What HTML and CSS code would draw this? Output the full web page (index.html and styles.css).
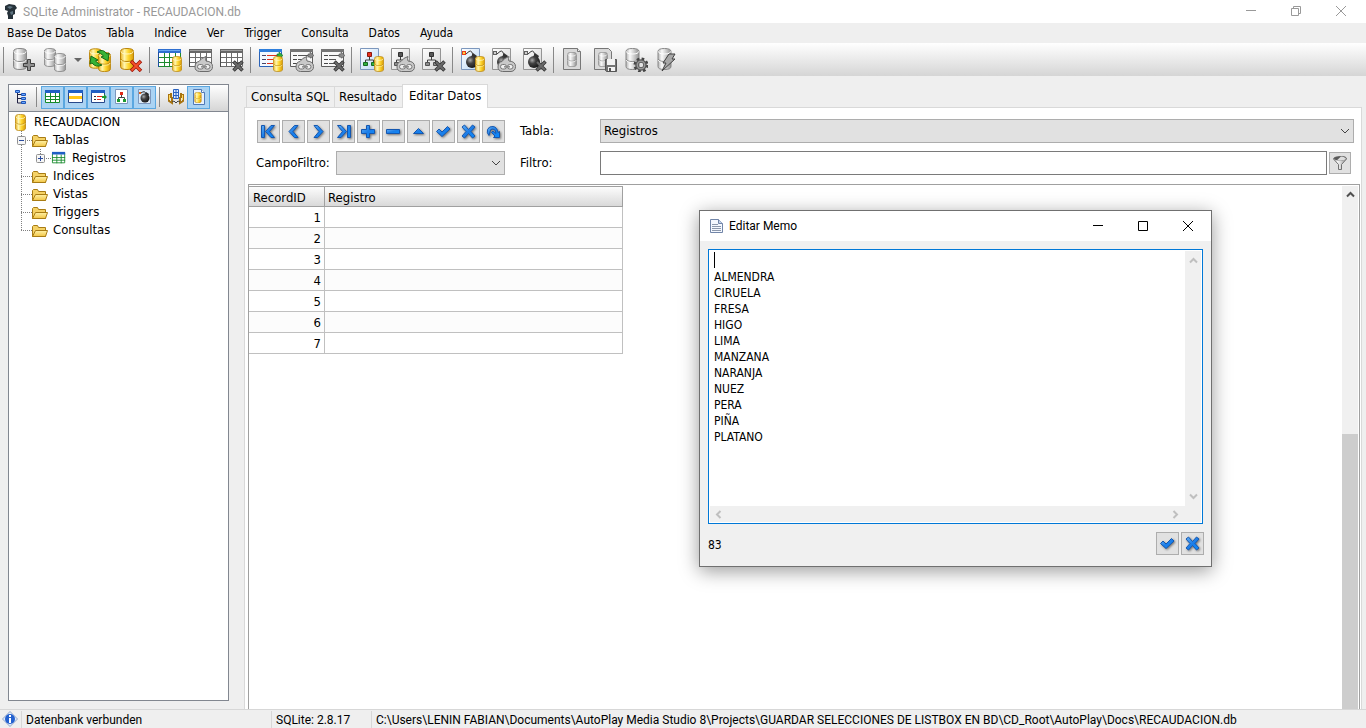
FILE: index.html
```html
<!DOCTYPE html>
<html lang="es">
<head>
    <meta charset="UTF-8">
    <meta name="viewport" content="width=device-width, initial-scale=1.0">
    <title>SQLite Administrator - RECAUDACION.db</title>
    <link rel="stylesheet" href="styles.css">
</head>
<body>
    <!-- Icon sprite -->
    <svg class="sprite" aria-hidden="true">
        <defs>
            <linearGradient id="gold">
                <stop offset="0" stop-color="#e8b020"/>
                <stop offset=".3" stop-color="#fff6b0"/>
                <stop offset=".6" stop-color="#ffd730"/>
                <stop offset="1" stop-color="#d89a08"/>
            </linearGradient>
            <linearGradient id="silver">
                <stop offset="0" stop-color="#b4b4b4"/>
                <stop offset=".3" stop-color="#fafafa"/>
                <stop offset=".6" stop-color="#d0d0d0"/>
                <stop offset="1" stop-color="#939393"/>
            </linearGradient>
            <linearGradient id="blue" x1="0" y1="0" x2="1" y2="1">
                <stop offset="0" stop-color="#64b0f5"/>
                <stop offset=".5" stop-color="#1b7de8"/>
                <stop offset="1" stop-color="#0a8cff"/>
            </linearGradient>
            <linearGradient id="paper" x1="0" y1="0" x2="1" y2="1">
                <stop offset="0" stop-color="#ffffff"/>
                <stop offset="1" stop-color="#b9d8f6"/>
            </linearGradient>
            <linearGradient id="folderFill" x1="0" y1="0" x2="0" y2="1">
                <stop offset="0" stop-color="#fff2a8"/>
                <stop offset="1" stop-color="#f2c544"/>
            </linearGradient>
            <radialGradient id="ball" cx=".35" cy=".35" r=".7">
                <stop offset="0" stop-color="#aaaaaa"/>
                <stop offset=".4" stop-color="#444444"/>
                <stop offset="1" stop-color="#151515"/>
            </radialGradient>
        </defs>

        <symbol id="db" viewBox="0 0 14 22">
            <path d="M.5 3.5Q.5.5 7 .5t6.500 3v15q0 3-6.500 3t-6.500-3z" fill="url(#gold)" stroke="#b98408"/>
            <path d="M1 3.500q0 2.500 6 2.500t6-2.500" fill="none" stroke="#fff8c8"/>
            <path d="M1 11q0 2.500 6 2.500t6-2.500" fill="none" stroke="#b98408"/>
            <path d="M1 12q0 2.500 6 2.500t6-2.500" fill="none" stroke="#fff3a0"/>
        </symbol>
        <symbol id="db-gray" viewBox="0 0 14 22">
            <path d="M.5 3.5Q.5.5 7 .5t6.500 3v15q0 3-6.500 3t-6.500-3z" fill="url(#silver)" stroke="#868686"/>
            <path d="M1 3.500q0 2.500 6 2.500t6-2.500" fill="none" stroke="#ffffff"/>
            <path d="M1 11q0 2.500 6 2.500t6-2.500" fill="none" stroke="#868686"/>
            <path d="M1 12q0 2.500 6 2.500t6-2.500" fill="none" stroke="#f8f8f8"/>
        </symbol>
        <symbol id="cross-gray" viewBox="0 0 12 12">
            <path d="M1.500 1.500l9 9M10.500 1.500l-9 9" stroke="#333333" stroke-width="3.500"/>
            <path d="M2 2l8 8M10 2l-8 8" stroke="#6a6a6a" stroke-width="2"/>
        </symbol>
        <symbol id="link" viewBox="0 0 19 16">
            <path d="M1 11q0-5 4-5.500Q7 2 12 .5q-1 2 0 4.500 6.500.5 6.500 5.500 0 4.500-4.500 5H5.500Q1 15 1 11z" fill="#c9c9c9" stroke="#6c6c6c"/>
            <rect x="3.500" y="8.500" width="6" height="4.500" rx="2.200" fill="#efefef" stroke="#777777"/>
            <rect x="10.500" y="8.500" width="5.500" height="4.500" rx="2.200" fill="#efefef" stroke="#777777"/>
            <path d="M7 10.800h6" stroke="#8c8c8c" stroke-width="1.500"/>
        </symbol>

        <symbol id="table" viewBox="0 0 24 24">
            <path d="M.5 1.500h22v17H.5z" fill="#ffffff" stroke="#1e8a2e"/>
            <path d="M6.500 4v15M11.500 4v15M17.500 4v15M0 9.500h23M0 14.500h23" stroke="#1e8a2e"/>
            <path d="M0 1h23v4H0z" fill="#2f6fd0"/>
            <path d="M1 2.500h21" stroke="#69a8f2"/>
            <path d="M.5 4v15" stroke="#1d4fa0"/>
        </symbol>
        <symbol id="view" viewBox="0 0 24 24">
            <path d="M.5 1.500h22v17H.5z" fill="#f4f9ff" stroke="#2b63b8"/>
            <path d="M0 1h23v3H0z" fill="#2f7fdc"/>
            <path d="M3 7.500h4M3 11.500h4M3 15.500h4" stroke="#444466"/>
            <path d="M8 7.500h11M8 11.500h7M8 15.500h6" stroke="#e0301c"/>
            <path d="M18 6h2V4l4 3.500-3 2.500h-1V9h-2z" fill="#2fae3c" stroke="#14701e" stroke-width=".6"/>
        </symbol>
        <symbol id="tree-page" viewBox="0 0 24 24">
            <path d="M.5.5h18v21H.5z" fill="url(#paper)" stroke="#7c97bd"/>
            <path d="M9.500 8v4M5.500 15v-3h8v3" fill="none" stroke="#404040"/>
            <path d="M7.500 4.500h4v4h-4z" fill="#e8301c" stroke="#8a1a10"/>
            <path d="M3.500 14.500h4v3h-4zM11.500 14.500h4v3h-4z" fill="#30b040" stroke="#176a22"/>
        </symbol>
        <symbol id="bomb-page" viewBox="0 0 24 24">
            <path d="M.5.5h18v21H.5z" fill="url(#paper)" stroke="#7c97bd"/>
            <path d="M12 8Q11 1.500 8 3.500L5 6" fill="none" stroke="#333333"/>
            <path d="M1 3h4v4H1z" fill="#e8401c"/>
            <path d="M2 4h2v2H2z" fill="#ffd040"/>
            <path d="M12 5l4 3-2 4-4-3z" fill="#333333"/>
            <circle cx="11" cy="14" r="6" fill="url(#ball)"/>
        </symbol>

        <symbol id="i-db-new" viewBox="0 0 24 24">
            <use href="#db-gray" x="1" y="0" width="14" height="22"/>
            <path d="M15.500 11.500h3v4h4v3h-4v4h-3v-4h-4v-3h4z" fill="#909090" stroke="#404040"/>
        </symbol>
        <symbol id="i-db-open" viewBox="0 0 24 24">
            <use href="#db-gray" x="1" y="0" width="12" height="19"/>
            <use href="#db-gray" x="11" y="5" width="12" height="19"/>
        </symbol>
        <symbol id="i-db-refresh" viewBox="0 0 24 24">
            <use href="#db" x="1" y="0" width="13" height="21"/>
            <use href="#db" x="10" y="4" width="13" height="20"/>
            <path d="M9 4q6-4 10 2l2-1-1 8-7-4 2.500-1Q13 5 9 4z" fill="#35b335" stroke="#166916"/>
            <path d="M14 17q-6 3-10-2l-2 1 1-8 7 4-2.500 1Q10 16 14 17z" fill="#35b335" stroke="#166916"/>
        </symbol>
        <symbol id="i-db-delete" viewBox="0 0 24 24">
            <use href="#db" x="1" y="0" width="14" height="22"/>
            <path d="M12 13l10 10M22 13L12 23" stroke="#9c1408" stroke-width="3.500"/>
            <path d="M12.500 13.500l9 9M21.500 13.500l-9 9" stroke="#f4502c" stroke-width="2"/>
        </symbol>

        <symbol id="i-table-add" viewBox="0 0 24 24">
            <use href="#table" width="24" height="24"/>
            <use href="#db" x="14" y="8" width="10" height="16"/>
        </symbol>
        <symbol id="i-table-edit" viewBox="0 0 24 24">
            <use href="#table" width="24" height="24"/>
            <use href="#link" x="5" y="8" width="19" height="16"/>
        </symbol>
        <symbol id="i-table-del" viewBox="0 0 24 24">
            <use href="#table" width="24" height="24"/>
            <use href="#cross-gray" x="12" y="12" width="12" height="12"/>
        </symbol>
        <symbol id="i-view-add" viewBox="0 0 24 24">
            <use href="#view" width="24" height="24"/>
            <use href="#db" x="14" y="8" width="10" height="16"/>
        </symbol>
        <symbol id="i-view-edit" viewBox="0 0 24 24">
            <use href="#view" width="24" height="24"/>
            <use href="#link" x="5" y="8" width="19" height="16"/>
        </symbol>
        <symbol id="i-view-del" viewBox="0 0 24 24">
            <use href="#view" width="24" height="24"/>
            <use href="#cross-gray" x="12" y="12" width="12" height="12"/>
        </symbol>
        <symbol id="i-index-add" viewBox="0 0 24 24">
            <use href="#tree-page" width="24" height="24"/>
            <use href="#db" x="14" y="8" width="10" height="16"/>
        </symbol>
        <symbol id="i-index-edit" viewBox="0 0 24 24">
            <use href="#tree-page" width="24" height="24"/>
            <use href="#link" x="5" y="8" width="19" height="16"/>
        </symbol>
        <symbol id="i-index-del" viewBox="0 0 24 24">
            <use href="#tree-page" width="24" height="24"/>
            <use href="#cross-gray" x="12" y="12" width="12" height="12"/>
        </symbol>
        <symbol id="i-trigger-add" viewBox="0 0 24 24">
            <use href="#bomb-page" width="24" height="24"/>
            <use href="#db" x="14" y="8" width="10" height="16"/>
        </symbol>
        <symbol id="i-trigger-edit" viewBox="0 0 24 24">
            <use href="#bomb-page" width="24" height="24"/>
            <use href="#link" x="5" y="8" width="19" height="16"/>
        </symbol>
        <symbol id="i-trigger-del" viewBox="0 0 24 24">
            <use href="#bomb-page" width="24" height="24"/>
            <use href="#cross-gray" x="12" y="12" width="12" height="12"/>
        </symbol>
        <symbol id="i-query-new" viewBox="0 0 24 24">
            <path d="M1.500.5h14l3 3v18h-17z" fill="#d9d9d9" stroke="#777777"/>
            <path d="M15.500.5v3h3" fill="#eeeeee" stroke="#777777"/>
            <use href="#db-gray" x="5" y="4" width="10" height="15"/>
        </symbol>
        <symbol id="i-query-save" viewBox="0 0 24 24">
            <path d="M1.500.5h14l3 3v18h-17z" fill="#d9d9d9" stroke="#777777"/>
            <use href="#db-gray" x="5" y="4" width="10" height="15"/>
            <path d="M12.500 11.500h11v12h-10l-1-1z" fill="#747474" stroke="#555555"/>
            <path d="M14 11h8v6h-8zM15 19h7v4h-7z" fill="#f2f2f2"/>
            <path d="M16 20h2v3h-2z" fill="#555555"/>
        </symbol>
        <symbol id="i-db-config" viewBox="0 0 24 24">
            <use href="#db-gray" x="1" y="0" width="15" height="22"/>
            <circle cx="17" cy="17" r="5.500" fill="none" stroke="#444444" stroke-width="4" stroke-dasharray="2.300 2"/>
            <circle cx="17" cy="17" r="4" fill="none" stroke="#555555" stroke-width="3.500"/>
            <circle cx="17" cy="17" r="3.700" fill="none" stroke="#999999" stroke-width="1.500"/>
        </symbol>
        <symbol id="i-db-run" viewBox="0 0 24 24">
            <use href="#db-gray" x="2" y="0" width="15" height="22"/>
            <path d="M14 6h6l-3 5h3L7 23l4-8H8z" fill="#a8a8a8" stroke="#404040"/>
        </symbol>

        <!-- Small icons -->
        <symbol id="s-tree" viewBox="0 0 16 16">
            <path d="M3.500 4v10H8M3.500 9.500H8M3.500 5.500H8" fill="none" stroke="#222244"/>
            <path d="M1.500 1.500h4v2h-4zM7.500 4.500h4v2h-4zM7.500 8.500h4v2h-4zM7.500 12.500h4v2h-4z" fill="#6aa8ff" stroke="#1f55b8"/>
        </symbol>
        <symbol id="s-table" viewBox="0 0 16 16">
            <path d="M.5 2.500h14v11H.5z" fill="#ffffff" stroke="#168a2c"/>
            <path d="M5.500 4v10M10.500 4v10M0 7.500h15M0 10.500h15" stroke="#168a2c"/>
            <path d="M0 1h15v3H0z" fill="#1f5fc4"/>
        </symbol>
        <symbol id="s-view" viewBox="0 0 16 16">
            <path d="M.5 2.500h14v11H.5z" fill="#ffffff" stroke="#27488a"/>
            <path d="M0 1h15v3H0z" fill="#1f5fc4"/>
            <path d="M1 7h13v3H1z" fill="#ffc61a"/>
        </symbol>
        <symbol id="s-index" viewBox="0 0 16 16">
            <path d="M.5 2.500h13v11H.5z" fill="#ffffff" stroke="#27488a"/>
            <path d="M0 1h14v3H0z" fill="#1f5fc4"/>
            <path d="M3 7.500h2M3 10.500h2" stroke="#333333"/>
            <path d="M6 7.500h5M6 10.500h4" stroke="#e02818"/>
            <path d="M11 7h2V5l3 3-3 3V9h-2z" fill="#1c9a30"/>
        </symbol>
        <symbol id="s-tree-page" viewBox="0 0 16 16">
            <path d="M1.500.5h12v14h-12z" fill="#ffffff" stroke="#7c97bd"/>
            <path d="M7.500 6v3M4.500 11V8.500h6V11" fill="none" stroke="#444444"/>
            <path d="M6 3h3v3H6z" fill="#e02818"/>
            <path d="M3 10h3v3H3zM9 10h3v3H9z" fill="#1c9a30"/>
        </symbol>
        <symbol id="s-bomb" viewBox="0 0 16 16">
            <path d="M1.500.5h12v14h-12z" fill="#dceaf8" stroke="#7c97bd"/>
            <path d="M9 5Q8 1 4 4" fill="none" stroke="#222222"/>
            <path d="M2 3h2v2H2z" fill="#e06018"/>
            <path d="M9 3l3 2-1 2-3-1z" fill="#222222"/>
            <circle cx="8" cy="9" r="4.500" fill="url(#ball)"/>
        </symbol>
        <symbol id="s-hands" viewBox="0 0 16 16">
            <path d="M5.500.5h5v9h-5z" fill="#dbe9ff" stroke="#2a62c0"/>
            <path d="M5 3.500h6M5 6.500h6M8 1v8" stroke="#2a62c0"/>
            <path d="M1 5v7l3 2V8M15 5v7l-3 2V8M3 4v5M13 4v5" fill="none" stroke="#a87410" stroke-width="2"/>
            <path d="M1.500 6v5M14.500 6v5" stroke="#ffd860"/>
            <path d="M4 13l2-1 2 2 2-2 2 1" fill="none" stroke="#444444"/>
        </symbol>
        <symbol id="s-dbpage" viewBox="0 0 16 16">
            <path d="M2.500.5h8l3 3v12h-11z" fill="#e8f2ff" stroke="#4f79b8"/>
            <path d="M10.500.5v3h3" fill="#ffffff" stroke="#4f79b8"/>
            <use href="#db" x="3" y="3" width="8" height="11"/>
        </symbol>
        <symbol id="s-folder" viewBox="0 0 16 14">
            <path d="M.5 13.500v-10l1-1h4l1 2h7v9z" fill="#f5d266" stroke="#a87c14"/>
            <path d="M.5 13.500l3-6h12l-2 6z" fill="url(#folderFill)" stroke="#a87c14"/>
        </symbol>

        <!-- Tree branches -->
        <symbol id="b-mid" viewBox="0 0 19 18">
            <path d="M8.500 0v18M8 9.500h11" stroke="#808080" stroke-dasharray="1 1"/>
        </symbol>
        <symbol id="b-end" viewBox="0 0 19 18">
            <path d="M8.500 0v10M8 9.500h11" stroke="#808080" stroke-dasharray="1 1"/>
        </symbol>
        <symbol id="b-line" viewBox="0 0 19 18">
            <path d="M8.500 0v18" stroke="#808080" stroke-dasharray="1 1"/>
        </symbol>
        <symbol id="b-minus" viewBox="0 0 19 18">
            <use href="#b-mid" width="19" height="18"/>
            <rect x="4.500" y="5.500" width="8" height="8" rx="1" fill="#f6f6f6" stroke="#919191"/>
            <path d="M6 9.500h5" stroke="#2a4a9c"/>
        </symbol>
        <symbol id="b-plus" viewBox="0 0 19 18">
            <use href="#b-end" width="19" height="18"/>
            <rect x="4.500" y="5.500" width="8" height="8" rx="1" fill="#f6f6f6" stroke="#919191"/>
            <path d="M6 9.500h5M8.500 7v5" stroke="#2a4a9c"/>
        </symbol>

        <!-- Navigator -->
        <symbol id="n-first" viewBox="0 0 19 19">
            <path d="M2.500 3.500h3v12h-3zM12 3.500h3.500l-5 6 5 6H12l-5.500-6z"/>
        </symbol>
        <symbol id="n-prev" viewBox="0 0 19 19"><path d="M10.500 3.500H14l-5 6 5 6h-3.500l-5.500-6z"/></symbol>
        <symbol id="n-next" viewBox="0 0 19 19"><path d="M8.500 3.500H5l5 6-5 6h3.500l5.500-6z"/></symbol>
        <symbol id="n-last" viewBox="0 0 19 19">
            <path d="M16.500 3.500h-3v12h3zM7 3.500H3.500l5 6-5 6H7l5.500-6z"/>
        </symbol>
        <symbol id="n-plus" viewBox="0 0 19 19"><path d="M7.500 3.500h3v4h5v4h-5v4h-3v-4h-5v-4h5z"/></symbol>
        <symbol id="n-minus" viewBox="0 0 19 19"><path d="M2.500 7.500h13v4h-13z"/></symbol>
        <symbol id="n-edit" viewBox="0 0 19 19"><path d="M4.500 11.500l5-5 5 5z"/></symbol>
        <symbol id="n-ok" viewBox="0 0 19 19"><path d="M2.500 9.500L5 7l3 3 5.500-5.500L16 7l-8 7.500z"/></symbol>
        <symbol id="n-cancel" viewBox="0 0 19 19">
            <path d="M3 5l2.500-2 4 4.500 4-4.500L16 5l-4 4.500 4 4.500-2.500 2-4-4.500-4 4.500L3 14l4-4.500z"/>
        </symbol>
        <symbol id="n-refresh" viewBox="0 0 19 19">
            <path d="M5 13.500Q2.500 11 3.500 7.500 5 4 9 4.500t5 6l1.500-1v6h-6l1.500-1.500-3.500-3.500L9 9l3 2.500Q12 7.500 9 7t-3 3z"/>
        </symbol>

        <symbol id="a-up" viewBox="0 0 9 9"><path d="M1 6.500l3.500-3.500L8 6.500"/></symbol>
        <symbol id="a-down" viewBox="0 0 9 9"><path d="M1 2.500L4.500 6 8 2.500"/></symbol>
        <symbol id="a-left" viewBox="0 0 9 9"><path d="M6.500 1L3 4.500 6.500 8"/></symbol>
        <symbol id="a-right" viewBox="0 0 9 9"><path d="M2.500 1L6 4.500 2.500 8"/></symbol>
        <symbol id="a-combo" viewBox="0 0 10 10"><path d="M1 3l4 4 4-4"/></symbol>

        <symbol id="w-min" viewBox="0 0 11 11"><path d="M0 4.500h10"/></symbol>
        <symbol id="w-max" viewBox="0 0 11 11"><path d="M.5.5h9v9h-9z"/></symbol>
        <symbol id="w-restore" viewBox="0 0 11 11"><path d="M.5 2.500h7v7h-7zM2.500 2V.5h7v7H8"/></symbol>
        <symbol id="w-close" viewBox="0 0 11 11"><path d="M0 0l10 10M10 0L0 10"/></symbol>
    </svg>

    <header class="title-bar">
        <svg class="app-icon" viewBox="0 0 14 16">
            <path d="M1 2l4-2 6 1 2 3-2 2v4l-2 1v4H4v-3L3 9 4 7 1 6z" fill="#26323a"/>
            <path d="M3 3l3-1 3 1-3 2zM6 8l3-1v3l-2 1z" fill="#5d7380"/>
        </svg>
        <h1>SQLite Administrator - RECAUDACION.db</h1>
        <div class="window-buttons">
            <button type="button" aria-label="Minimizar"><svg><use href="#w-min"/></svg></button>
            <button type="button" aria-label="Restaurar"><svg><use href="#w-restore"/></svg></button>
            <button type="button" aria-label="Cerrar"><svg><use href="#w-close"/></svg></button>
        </div>
    </header>

    <nav class="menu-bar">
        <a href="#">Base De Datos</a>
        <a href="#">Tabla</a>
        <a href="#">Indice</a>
        <a href="#">Ver</a>
        <a href="#">Trigger</a>
        <a href="#">Consulta</a>
        <a href="#">Datos</a>
        <a href="#">Ayuda</a>
    </nav>

    <div class="toolbar">
        <span class="separator"></span>
        <button type="button" aria-label="Nueva base de datos"><svg><use href="#i-db-new"/></svg></button>
        <button type="button" aria-label="Abrir base de datos"><svg><use href="#i-db-open"/></svg></button>
        <button type="button" class="drop" aria-label="Recientes"></button>
        <button type="button" aria-label="Actualizar"><svg><use href="#i-db-refresh"/></svg></button>
        <button type="button" aria-label="Borrar base de datos"><svg><use href="#i-db-delete"/></svg></button>
        <span class="separator"></span>
        <button type="button" aria-label="Crear tabla"><svg><use href="#i-table-add"/></svg></button>
        <button type="button" class="disabled" aria-label="Editar tabla"><svg><use href="#i-table-edit"/></svg></button>
        <button type="button" class="disabled" aria-label="Borrar tabla"><svg><use href="#i-table-del"/></svg></button>
        <span class="separator"></span>
        <button type="button" aria-label="Crear vista"><svg><use href="#i-view-add"/></svg></button>
        <button type="button" class="disabled" aria-label="Editar vista"><svg><use href="#i-view-edit"/></svg></button>
        <button type="button" class="disabled" aria-label="Borrar vista"><svg><use href="#i-view-del"/></svg></button>
        <span class="separator"></span>
        <button type="button" aria-label="Crear indice"><svg><use href="#i-index-add"/></svg></button>
        <button type="button" class="disabled" aria-label="Editar indice"><svg><use href="#i-index-edit"/></svg></button>
        <button type="button" class="disabled" aria-label="Borrar indice"><svg><use href="#i-index-del"/></svg></button>
        <span class="separator"></span>
        <button type="button" aria-label="Crear trigger"><svg><use href="#i-trigger-add"/></svg></button>
        <button type="button" class="disabled" aria-label="Editar trigger"><svg><use href="#i-trigger-edit"/></svg></button>
        <button type="button" class="disabled" aria-label="Borrar trigger"><svg><use href="#i-trigger-del"/></svg></button>
        <span class="separator"></span>
        <button type="button" aria-label="Nueva consulta"><svg><use href="#i-query-new"/></svg></button>
        <button type="button" aria-label="Guardar consulta"><svg><use href="#i-query-save"/></svg></button>
        <button type="button" aria-label="Configurar"><svg><use href="#i-db-config"/></svg></button>
        <button type="button" aria-label="Ejecutar"><svg><use href="#i-db-run"/></svg></button>
    </div>

    <main class="workspace">
        <aside class="sidebar">
            <div class="tree-toolbar">
                <button type="button" aria-label="Arbol"><svg><use href="#s-tree"/></svg></button>
                <span class="separator"></span>
                <button type="button" class="pressed" aria-label="Tablas"><svg><use href="#s-table"/></svg></button>
                <button type="button" class="pressed" aria-label="Vistas"><svg><use href="#s-view"/></svg></button>
                <button type="button" class="pressed" aria-label="Consultas"><svg><use href="#s-index"/></svg></button>
                <button type="button" class="pressed" aria-label="Indices"><svg><use href="#s-tree-page"/></svg></button>
                <button type="button" class="pressed" aria-label="Triggers"><svg><use href="#s-bomb"/></svg></button>
                <span class="separator"></span>
                <button type="button" aria-label="Campos"><svg><use href="#s-hands"/></svg></button>
                <button type="button" class="pressed" aria-label="SQL"><svg><use href="#s-dbpage"/></svg></button>
            </div>
            <ul class="tree">
                <li><svg class="root-icon"><use href="#db"/></svg>RECAUDACION</li>
                <li><svg class="branch"><use href="#b-minus"/></svg><svg class="folder"><use href="#s-folder"/></svg>Tablas</li>
                <li><svg class="branch"><use href="#b-line"/></svg><svg class="branch"><use href="#b-plus"/></svg><svg class="folder"><use href="#s-table"/></svg>Registros</li>
                <li><svg class="branch"><use href="#b-mid"/></svg><svg class="folder"><use href="#s-folder"/></svg>Indices</li>
                <li><svg class="branch"><use href="#b-mid"/></svg><svg class="folder"><use href="#s-folder"/></svg>Vistas</li>
                <li><svg class="branch"><use href="#b-mid"/></svg><svg class="folder"><use href="#s-folder"/></svg>Triggers</li>
                <li><svg class="branch"><use href="#b-end"/></svg><svg class="folder"><use href="#s-folder"/></svg>Consultas</li>
            </ul>
        </aside>

        <section class="content">
            <div class="tabs">
                <button type="button" class="tab">Consulta SQL</button>
                <button type="button" class="tab">Resultado</button>
                <button type="button" class="tab active">Editar Datos</button>
            </div>
            <div class="panel">
                <div class="filters">
                    <div class="navigator">
                        <button type="button" class="nav-button" aria-label="Primero"><svg><use href="#n-first"/></svg></button>
                        <button type="button" class="nav-button" aria-label="Anterior"><svg><use href="#n-prev"/></svg></button>
                        <button type="button" class="nav-button" aria-label="Siguiente"><svg><use href="#n-next"/></svg></button>
                        <button type="button" class="nav-button" aria-label="Ultimo"><svg><use href="#n-last"/></svg></button>
                        <button type="button" class="nav-button" aria-label="Insertar"><svg><use href="#n-plus"/></svg></button>
                        <button type="button" class="nav-button" aria-label="Borrar"><svg><use href="#n-minus"/></svg></button>
                        <button type="button" class="nav-button" aria-label="Editar"><svg><use href="#n-edit"/></svg></button>
                        <button type="button" class="nav-button" aria-label="Guardar"><svg><use href="#n-ok"/></svg></button>
                        <button type="button" class="nav-button" aria-label="Cancelar"><svg><use href="#n-cancel"/></svg></button>
                        <button type="button" class="nav-button" aria-label="Refrescar"><svg><use href="#n-refresh"/></svg></button>
                    </div>
                    <label for="tabla">Tabla:</label>
                    <div class="combo">
                        <select id="tabla"><option>Registros</option></select>
                        <svg><use href="#a-combo"/></svg>
                    </div>
                    <div class="field-filter">
                        <label for="campoFiltro">CampoFiltro:</label>
                        <div class="combo">
                            <select id="campoFiltro"><option></option></select>
                            <svg><use href="#a-combo"/></svg>
                        </div>
                    </div>
                    <label for="filtro">Filtro:</label>
                    <div class="filter-box">
                        <input type="text" id="filtro">
                        <button type="button" class="filter-button" aria-label="Filtrar">
                            <svg viewBox="0 0 16 16">
                                <path d="M1.500 4q0-2 6.500-2.500t6.500 2.500l-5 5.500v5h-3v-5z" fill="url(#silver)" stroke="#707070"/>
                                <ellipse cx="8" cy="3.500" rx="6" ry="2" fill="#5a5a5a"/>
                                <path d="M5 5.200q8 1 9-1.700-2-2-5-2z" fill="#dddddd"/>
                            </svg>
                        </button>
                    </div>
                </div>
                <div class="grid-box">
                    <div class="grid-area">
                        <table class="data-grid">
                            <thead>
                                <tr><th class="col-id">RecordID</th><th class="col-text">Registro</th></tr>
                            </thead>
                            <tbody>
                                <tr><td>1</td><td></td></tr>
                                <tr><td>2</td><td></td></tr>
                                <tr><td>3</td><td></td></tr>
                                <tr><td>4</td><td></td></tr>
                                <tr><td>5</td><td></td></tr>
                                <tr><td>6</td><td></td></tr>
                                <tr><td>7</td><td></td></tr>
                            </tbody>
                        </table>
                    </div>
                    <div class="scrollbar">
                        <svg><use href="#a-up"/></svg>
                        <div class="thumb"></div>
                    </div>
                </div>
            </div>
        </section>
    </main>

    <footer class="status-bar">
        <span class="status-icon">
            <svg viewBox="0 0 16 16">
                <path d="M8 .5L15.500 8 8 15.500.5 8z" fill="#dce8fa" stroke="#8fa4c8"/>
                <circle cx="8" cy="8" r="5" fill="#2461cf"/>
                <path d="M7 4h2v2H7zM7 7h2v5H7z" fill="#ffffff"/>
            </svg>
        </span>
        <span class="status-message">Datenbank verbunden</span>
        <span class="status-version">SQLite: 2.8.17</span>
        <span class="status-path">C:\Users\LENIN FABIAN\Documents\AutoPlay Media Studio 8\Projects\GUARDAR SELECCIONES DE LISTBOX EN BD\CD_Root\AutoPlay\Docs\RECAUDACION.db</span>
    </footer>

    <!-- Memo editor window -->
    <div class="memo-window" role="dialog" aria-labelledby="memoTitle">
        <div class="memo-title">
            <svg class="memo-icon" viewBox="0 0 13 14">
                <path d="M.5.5h8l4 4v9H.5z" fill="#f4f8ff" stroke="#7185a8"/>
                <path d="M8.500.5v4h4" fill="#c4d2ea" stroke="#7185a8"/>
                <path d="M2 5.500h6M2 7.500h9M2 9.500h9M2 11.500h9" stroke="#8c98ac"/>
            </svg>
            <h2 id="memoTitle">Editar Memo</h2>
            <div class="window-buttons">
                <button type="button" aria-label="Minimizar"><svg><use href="#w-min"/></svg></button>
                <button type="button" aria-label="Maximizar"><svg><use href="#w-max"/></svg></button>
                <button type="button" aria-label="Cerrar"><svg><use href="#w-close"/></svg></button>
            </div>
        </div>
        <div class="memo-box">
            <textarea aria-label="Memo" spellcheck="false">&#10;
ALMENDRA
CIRUELA
FRESA
HIGO
LIMA
MANZANA
NARANJA
NUEZ
PERA
PIÑA
PLATANO</textarea>
            <div class="memo-vscroll">
                <svg><use href="#a-up"/></svg>
                <svg><use href="#a-down"/></svg>
            </div>
            <div class="memo-hscroll">
                <svg><use href="#a-left"/></svg>
                <svg><use href="#a-right"/></svg>
            </div>
            <span class="caret"></span>
        </div>
        <div class="memo-footer">
            <span class="memo-count">83</span>
            <button type="button" class="nav-button" aria-label="Aceptar"><svg><use href="#n-ok"/></svg></button>
            <button type="button" class="nav-button" aria-label="Cancelar"><svg><use href="#n-cancel"/></svg></button>
        </div>
    </div>
</body>
</html>
```
FILE: styles.css
```css
/* General Styles */
* {
    box-sizing: border-box;
    margin: 0;
    padding: 0;
}

body {
    background-color: #efefef;
    color: #000;
    display: flex;
    flex-direction: column;
    height: 100vh;
    overflow: hidden;
    font-family: "DejaVu Sans Condensed", "DejaVu Sans", sans-serif;
    font-size: 13px;
    line-height: 18px;
}

button,
input,
select,
textarea {
    font: inherit;
    color: inherit;
    border-radius: 0;
}

button {
    border: none;
    background: none;
    display: flex;
    align-items: center;
    justify-content: center;
}

svg {
    display: block;
    flex: none;
}

.sprite {
    position: absolute;
    width: 0;
    height: 0;
}

/* Title bar */
.title-bar {
    display: flex;
    align-items: center;
    height: 23px;
    padding: 0 2px 0 4px;
    gap: 5px;
    background-color: #fff;
    color: #999;
    font-family: Roboto, sans-serif;
}

.title-bar h1,
.memo-title h2 {
    flex: 1;
    font-size: 12px;
    font-weight: normal;
}

.app-icon {
    width: 14px;
    height: 16px;
}

.window-buttons {
    display: flex;
}

.window-buttons button {
    width: 45px;
    height: 20px;
}

.window-buttons svg {
    width: 11px;
    height: 11px;
    fill: none;
    stroke: currentColor;
}

/* Menu */
.menu-bar {
    display: flex;
    align-items: center;
    gap: 20px;
    height: 20px;
    padding-left: 7px;
    font-size: 12px;
}

.menu-bar a {
    color: #000;
    text-decoration: none;
}

/* Main toolbar */
.toolbar {
    display: flex;
    align-items: center;
    height: 33px;
    background: linear-gradient(#fff, #d5d5d5);
}

.toolbar button {
    width: 31px;
    height: 31px;
    padding-left: 4px;
    justify-content: flex-start;
}

.toolbar svg {
    width: 24px;
    height: 24px;
}

.toolbar .drop {
    width: 14px;
}

.toolbar .drop::after {
    content: "";
    border: 4px solid transparent;
    border-top-color: #666;
    border-bottom: none;
}

.disabled svg {
    filter: grayscale(1);
}

.separator {
    width: 1px;
    height: 26px;
    margin: 0 4px 0 3px;
    background-color: #888;
}

/* Workspace */
.workspace {
    flex: 1;
    min-height: 0;
    display: flex;
    gap: 15px;
    padding: 8px 4px 0 8px;
}

.sidebar {
    width: 221px;
    margin-bottom: 8px;
    border: 1px solid #828790;
    background-color: #fff;
}

.tree-toolbar {
    display: flex;
    align-items: center;
    height: 27px;
    padding: 0 1px 2px;
    border-bottom: 1px solid #828790;
    background: linear-gradient(#fff, #d5d5d5);
}

.tree-toolbar button {
    width: 23px;
    height: 23px;
}

.tree-toolbar svg {
    width: 16px;
    height: 16px;
}

.tree-toolbar .separator {
    height: 20px;
}

.tree-toolbar .pressed {
    background-color: #abd3f3;
    border: 1px solid #5ba7e0;
}

.tree {
    list-style: none;
    padding: 1px 4px;
}

.tree li {
    display: flex;
    align-items: center;
    height: 18px;
}

.root-icon {
    width: 11px;
    height: 17px;
    margin: 0 8px 0 2px;
}

.branch {
    width: 19px;
    height: 18px;
}

.folder {
    width: 16px;
    height: 14px;
    margin-right: 5px;
}

/* Tabs */
.content {
    flex: 1;
    min-width: 0;
    display: flex;
    flex-direction: column;
}

.tabs {
    display: flex;
    align-items: flex-end;
    padding-left: 2px;
}

.tab {
    height: 21px;
    padding: 0 5px 0 4px;
    border: 1px solid #d9d9d9;
    border-width: 1px 0 0 1px;
}

.tab.active {
    height: 24px;
    padding: 0 6px 2px;
    border-right-width: 1px;
    margin-bottom: -1px;
    background-color: #fff;
    z-index: 1;
}

.panel {
    flex: 1;
    min-height: 0;
    display: flex;
    flex-direction: column;
    border: 1px solid #d9d9d9;
    border-bottom: none;
    background-color: #fff;
}

/* Filter rows */
.filters {
    display: grid;
    grid-template-columns: 264px 80px 1fr;
    row-gap: 8px;
    align-items: center;
    padding: 11px 7px 9px 11px;
}

.navigator {
    display: flex;
    gap: 2px;
    padding-left: 1px;
}

.nav-button {
    width: 23px;
    height: 23px;
    border: 1px solid #adadad;
    background-color: #e1e1e1;
}

.nav-button svg {
    width: 19px;
    height: 19px;
    fill: url(#blue);
    stroke: #1457b0;
    stroke-linejoin: round;
    filter: drop-shadow(1px 1px 1px rgba(0, 0, 0, 0.5));
}

.field-filter {
    display: flex;
    align-items: center;
    gap: 6px;
    padding-right: 15px;
}

.combo {
    flex: 1;
    display: grid;
    align-items: center;
}

.combo > * {
    grid-area: 1 / 1;
}

.combo select {
    appearance: none;
    width: 100%;
    height: 24px;
    padding-left: 3px;
    border: 1px solid #adadad;
    background-color: #e1e1e1;
}

.combo svg {
    justify-self: end;
    width: 10px;
    height: 10px;
    margin-right: 4px;
    fill: none;
    stroke: #444;
    pointer-events: none;
}

.filter-box {
    display: flex;
    align-items: center;
    gap: 2px;
    padding-right: 3px;
}

.filter-box input {
    flex: 1;
    min-width: 0;
    height: 24px;
    padding: 0 4px;
    border: 1px solid #7a7a7a;
    background-color: #fff;
}

.filter-button {
    width: 22px;
    height: 22px;
    border: 1px solid #adadad;
    background-color: #e1e1e1;
}

.filter-button svg {
    width: 16px;
    height: 16px;
}

/* Data grid */
.grid-box {
    flex: 1;
    min-height: 0;
    display: flex;
    margin: 0 1px 0 3px;
    padding: 1px 1px 0 0;
    border: 1px solid #a0a0a0;
    border-bottom: none;
}

.grid-area {
    flex: 1;
}

.data-grid {
    border-collapse: separate;
    border-spacing: 0;
    table-layout: fixed;
}

.data-grid th {
    height: 21px;
    padding: 1px 3px 0;
    font-weight: normal;
    line-height: 17px;
    text-align: left;
    border: 1px solid #a0a0a0;
    border-left: none;
    background: linear-gradient(#fcfcfc, #d9d9d9);
}

.data-grid .col-id {
    width: 76px;
    padding-left: 4px;
}

.data-grid .col-text {
    width: 298px;
}

.data-grid td {
    height: 21px;
    padding: 1px 3px 0;
    text-align: right;
    border: 1px solid #c0c0c0;
    border-width: 0 1px 1px 0;
}

.data-grid tr:nth-child(even) td {
    background-color: #fcfcfc;
}

.scrollbar {
    width: 16px;
    display: flex;
    flex-direction: column;
    justify-content: space-between;
    align-items: center;
    padding-top: 4px;
    background-color: #f0f0f0;
}

.scrollbar svg,
.memo-box svg {
    width: 9px;
    height: 9px;
    fill: none;
    stroke: #505050;
    stroke-width: 2;
}

.scrollbar .thumb {
    width: 100%;
    height: 53%;
    background-color: #cdcdcd;
}

/* Status bar */
.status-bar {
    display: flex;
    height: 19px;
    border-top: 1px solid #d7d7d7;
    font-family: Roboto, sans-serif;
    font-size: 12px;
    white-space: nowrap;
}

.status-bar span {
    padding-left: 4px;
    margin-top: 1px;
    border-left: 1px solid #d7d7d7;
}

.status-bar .status-icon {
    width: 21px;
    padding-left: 2px;
    border-left: none;
}

.status-icon svg {
    width: 16px;
    height: 16px;
}

.status-message {
    width: 250px;
}

.status-version {
    width: 100px;
}

.status-path {
    flex: 1;
}

/* Memo window */
.memo-window {
    position: absolute;
    left: 699px;
    top: 210px;
    width: 513px;
    border: 1px solid #707070;
    background-color: #f0f0f0;
    box-shadow: 0 4px 18px rgba(0, 0, 0, 0.4);
}

.memo-title {
    display: flex;
    align-items: center;
    height: 30px;
    padding-left: 10px;
    gap: 6px;
    background-color: #fff;
    font-family: Roboto, sans-serif;
}

.memo-icon {
    width: 13px;
    height: 14px;
}

.memo-box {
    position: relative;
    display: grid;
    grid-template-columns: 1fr 16px;
    grid-template-rows: 255px 16px;
    margin: 8px 8px 0;
    padding: 1px;
    border: 1px solid #0078d7;
    background-color: #fff;
}

.memo-box textarea {
    padding: 2px 4px 0;
    border: none;
    outline: none;
    resize: none;
    overflow: hidden;
    font-size: 12px;
    line-height: 16px;
    background-color: #fff;
}

.memo-box svg {
    stroke: #bfbfbf;
}

.memo-vscroll,
.memo-hscroll {
    display: flex;
    align-items: center;
    justify-content: space-between;
    background-color: #f0f0f0;
}

.memo-vscroll {
    flex-direction: column;
    padding: 5px 0;
}

.memo-hscroll {
    grid-column: 1 / 3;
    padding: 0 21px 0 4px;
}

.caret {
    position: absolute;
    left: 5px;
    top: 2px;
    width: 1px;
    height: 16px;
    background-color: #000;
}

.memo-footer {
    display: flex;
    align-items: center;
    gap: 2px;
    padding: 8px 7px 11px 8px;
}

.memo-count {
    flex: 1;
    padding-top: 2px;
    font-size: 12px;
}
```
